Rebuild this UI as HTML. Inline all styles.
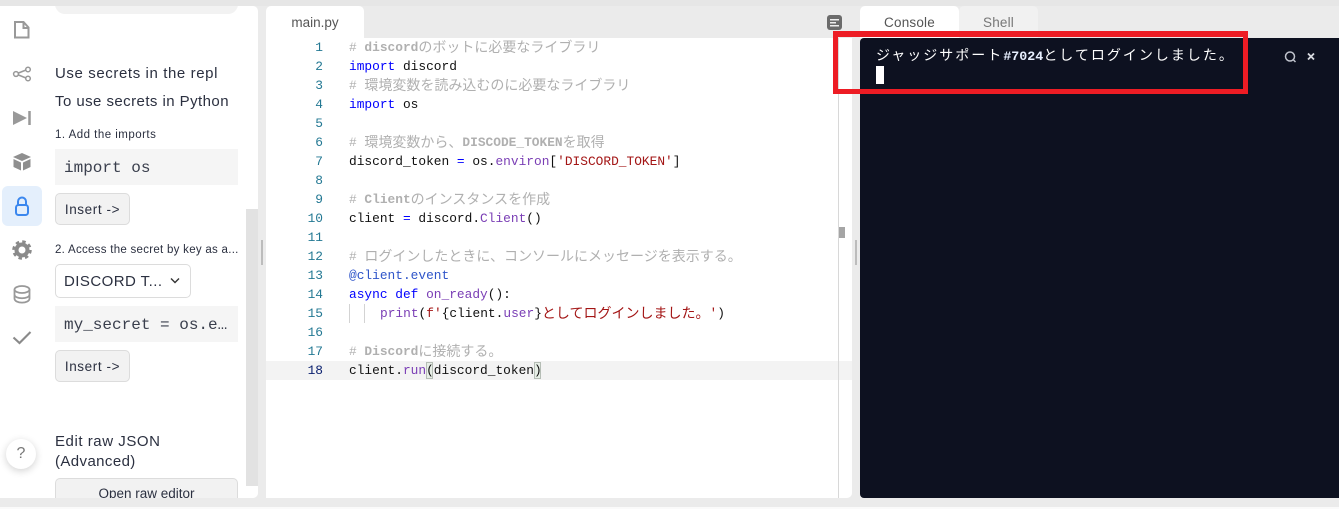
<!DOCTYPE html>
<html><head><meta charset="utf-8">
<style>
html,body{margin:0;padding:0;width:1339px;height:509px;overflow:hidden;background:#ebebeb;}
.a{position:absolute;}
body{font-family:"Liberation Sans","Noto Sans CJK JP",sans-serif;color:#2b3040;position:relative;}
.t{position:absolute;white-space:nowrap;line-height:20px;}
.m{font-family:"Liberation Mono","Noto Sans CJK JP",monospace;}
.btn{position:absolute;background:#f2f2f2;border:1px solid #dcdcdc;border-radius:5px;box-sizing:border-box;font-size:13.5px;letter-spacing:.6px;line-height:31px;text-align:center;color:#2b3040;}
.code{position:absolute;background:#f5f5f5;left:55px;width:183px;height:36px;font-family:"Liberation Mono",monospace;font-size:16px;line-height:39px;padding-left:9px;box-sizing:border-box;color:#3a3f4d;}
.ln{position:absolute;left:286px;width:37px;text-align:right;font-family:"Liberation Mono",monospace;font-size:12.85px;line-height:19px;color:#237893;}
.l{position:absolute;left:349px;white-space:pre;font-family:"Liberation Mono","Noto Sans CJK JP",monospace;font-size:12.85px;line-height:19px;color:#111;}
.l i{font-style:normal;font-size:14px;line-height:1;position:relative;top:1px;}
.c{color:#b0b0b0}.k{color:#0000ff}.f{color:#7a3eb5}.s{color:#a31515}.o{color:#0000ff}
</style></head><body>
<div class="a" style="left:0;top:0;width:1339px;height:6px;background:#e6e6e6"></div>
<div class="a" style="left:0;top:507px;width:1339px;height:2px;background:#fafafa"></div>

<!-- sidebar -->
<div class="a" style="left:0;top:6px;width:258px;height:492px;background:#fff;border-radius:0 5px 5px 0;overflow:hidden">
  <div class="a" style="left:55px;top:-10px;width:183px;height:18px;background:#f2f2f2;border-radius:0 0 10px 10px"></div>
  <div class="a" style="left:246px;top:203px;width:12px;height:277px;background:#e2e2e2"></div>
</div>
<div class="a" style="left:2px;top:186px;width:40px;height:40px;background:#e4effc;border-radius:6px"></div>

<svg class="a" style="left:0;top:0" width="50" height="360" fill="none" stroke="#999" stroke-width="2">
  <path d="M15 22h8.500l5 5.500v10h-13.500z M23.500 22v6h5"/>
  <g stroke-width="1.500"><circle cx="16" cy="74" r="2.400"/><circle cx="28" cy="69.500" r="2.300"/><circle cx="28" cy="78.500" r="2.300"/><path d="M18.500 73l7.500-3M18.500 75l7.500 3"/></g>
  <path d="M13 111l14 7-14 7z" fill="#999" stroke="none"/><path d="M29.500 111v14" stroke-width="2.500"/>
  <path d="M22 153l9 4-9 4-9-4z" fill="#8f8f8f" stroke="none"/><path d="M13.500 159l7.500 3.500v8l-7.500-3.500zM30.500 159l-7.500 3.500v8l7.500-3.500z" fill="#8f8f8f" stroke="none"/>
  <rect x="16" y="205" width="12" height="10" rx="2.500" stroke="#3b87ee" stroke-width="2"/><path d="M18 205v-3.500a4 4 0 0 1 8 0v3.500" stroke="#3b87ee" stroke-width="2"/>
  <circle cx="22" cy="250" r="5.500" stroke="#8a8a8a" stroke-width="4"/><circle cx="22" cy="250" r="8.500" stroke="#8a8a8a" stroke-width="2.500" stroke-dasharray="3.500 3.170"/>
  <ellipse cx="22" cy="289.500" rx="7.500" ry="3.500" stroke-width="1.800"/><path d="M14.500 289.500v9c0 5.500 15 5.500 15 0v-9M14.500 294.500c0 5 15 5 15 0" stroke-width="1.800"/>
  <path d="M13.500 337.500l6 5.500 11-11" stroke-width="2.100" stroke="#8a8a8a"/>
</svg>

<div class="t" style="left:55px;top:64px;font-size:15px;letter-spacing:.6px">Use secrets in the repl</div>
<div class="t" style="left:55px;top:92px;font-size:15px;letter-spacing:.44px">To use secrets in Python</div>
<div class="t" style="left:55px;top:125px;font-size:11.500px;letter-spacing:.48px">1. Add the imports</div>
<div class="code" style="top:149px">import os</div>
<div class="btn" style="left:55px;top:193px;width:75px;height:32px">Insert -&gt;</div>
<div class="t" style="left:55px;top:240px;font-size:11.500px;letter-spacing:.28px">2. Access the secret by key as a...</div>
<div class="a" style="left:55px;top:264px;width:136px;height:34px;border:1px solid #dcdcdc;border-radius:5px;box-sizing:border-box;background:#fff"></div>
<div class="t" style="left:64px;top:272px;font-size:15px;letter-spacing:.45px">DISCORD T...</div>
<svg class="a" style="left:169px;top:276px" width="12" height="9" fill="none" stroke="#333" stroke-width="1.400"><path d="M2 2.500l4 4 4-4"/></svg>
<div class="code" style="top:306px;font-size:16px">my_secret = os.e…</div>
<div class="btn" style="left:55px;top:350px;width:75px;height:32px">Insert -&gt;</div>
<div class="t" style="left:55px;top:432px;font-size:15px;letter-spacing:.55px">Edit raw JSON</div>
<div class="t" style="left:55px;top:452px;font-size:15px;letter-spacing:.4px">(Advanced)</div>
<div class="a" style="left:55px;top:478px;width:183px;height:20px;background:#f2f2f2;border:1px solid #dcdcdc;border-bottom:0;border-radius:5px 5px 0 0;box-sizing:border-box;overflow:hidden;text-align:center;font-size:13.500px;line-height:30px">Open raw editor</div>
<div class="a" style="left:6px;top:439px;width:30px;height:30px;border-radius:50%;background:#fff;box-shadow:0 2px 8px rgba(0,0,0,.18);text-align:center;font-size:16px;line-height:30px;color:#777">?</div>

<div class="a" style="left:261px;top:240px;width:2px;height:25px;background:#bcbcbc"></div>

<!-- editor -->
<div class="a" style="left:266px;top:6px;width:98px;height:32px;background:#fff;border-radius:5px 5px 0 0;text-align:center;font-size:13.500px;line-height:33px;color:#555">main.py</div>
<div class="a" style="left:266px;top:38px;width:586px;height:460px;background:#fff;border-radius:0 0 5px 0"></div>
<div class="a" style="left:266px;top:361px;width:586px;height:19px;background:#f3f3f3"></div>
<div class="a" style="left:838px;top:38px;width:1px;height:460px;background:#d8d8d8"></div>
<div class="a" style="left:839px;top:227px;width:6px;height:11px;background:#a5a5a5"></div>
<div class="a" style="left:855px;top:240px;width:2px;height:25px;background:#bcbcbc"></div>

<div class="ln" style="top:38px">1</div><div class="ln" style="top:57px">2</div><div class="ln" style="top:76px">3</div><div class="ln" style="top:95px">4</div><div class="ln" style="top:114px">5</div><div class="ln" style="top:133px">6</div><div class="ln" style="top:152px">7</div><div class="ln" style="top:171px">8</div><div class="ln" style="top:190px">9</div><div class="ln" style="top:209px">10</div><div class="ln" style="top:228px">11</div><div class="ln" style="top:247px">12</div><div class="ln" style="top:266px">13</div><div class="ln" style="top:285px">14</div><div class="ln" style="top:304px">15</div><div class="ln" style="top:323px">16</div><div class="ln" style="top:342px">17</div><div class="ln" style="top:361px;color:#0b216f">18</div>

<div class="l c" style="top:38px"># <b>discord</b><i>のボットに必要なライブラリ</i></div>
<div class="l" style="top:57px"><span class="k">import</span> discord</div>
<div class="l c" style="top:76px"># <i>環境変数を読み込むのに必要なライブラリ</i></div>
<div class="l" style="top:95px"><span class="k">import</span> os</div>
<div class="l c" style="top:133px"># <i>環境変数から、</i><b>DISCODE_TOKEN</b><i>を取得</i></div>
<div class="l" style="top:152px">discord_token <span class="o">=</span> os.<span class="f">environ</span>[<span class="s">'DISCORD_TOKEN'</span>]</div>
<div class="l c" style="top:190px"># <b>Client</b><i>のインスタンスを作成</i></div>
<div class="l" style="top:209px">client <span class="o">=</span> discord.<span class="f">Client</span>()</div>
<div class="l c" style="top:247px"># <i>ログインしたときに、コンソールにメッセージを表示する。</i></div>
<div class="l" style="top:266px;color:#2f55c9">@client.event</div>
<div class="l" style="top:285px"><span class="k">async def</span> <span class="f">on_ready</span>():</div>
<div class="a" style="left:349px;top:304px;width:1px;height:19px;background:#d3d3d3"></div>
<div class="a" style="left:364px;top:304px;width:1px;height:19px;background:#d3d3d3"></div>
<div class="l" style="top:304px;left:380px"><span class="f">print</span>(<span class="s">f'</span>{client.<span class="f">user</span>}<span class="s"><i>としてログインしました。</i>'</span>)</div>
<div class="l c" style="top:342px"># <b>Discord</b><i>に接続する。</i></div>
<div class="a" style="left:426px;top:362px;width:7px;height:17px;background:#e6eee6;border:1px solid #b5bdb5;box-sizing:border-box"></div>
<div class="a" style="left:534px;top:362px;width:7px;height:17px;background:#e6eee6;border:1px solid #b5bdb5;box-sizing:border-box"></div>
<div class="l" style="top:361px">client.<span class="f">run</span>(discord_token)</div>

<!-- top right -->
<svg class="a" style="left:827px;top:15px" width="15" height="15"><rect width="15" height="15" rx="3" fill="#6b6b6b"/><path d="M3 4h9v1.500H3zM3 7h6v1.500H3zM3 10h9v1.500H3z" fill="#eee"/></svg>
<div class="a" style="left:860px;top:6px;width:99px;height:32px;background:#fff;border-radius:5px 5px 0 0;text-align:center;font-size:13.500px;line-height:33px;color:#555;letter-spacing:.2px">Console</div>
<div class="a" style="left:959px;top:6px;width:79px;height:32px;background:#f1f1f1;border-radius:5px 5px 0 0;text-align:center;font-size:13.500px;line-height:33px;color:#777;letter-spacing:.2px">Shell</div>

<!-- console -->
<div class="a" style="left:860px;top:38px;width:479px;height:460px;background:#0d1120;border-radius:4px 0 0 4px"></div>
<div class="a m" style="left:876px;top:47px;height:20px;white-space:pre;line-height:20px;color:#fff;font-size:14px;letter-spacing:2px">ジャッジサポート<b style="font-size:13.340px;letter-spacing:0;color:#e8f0ff">#7024</b>としてログインしました。</div>
<div class="a" style="left:876px;top:66px;width:8px;height:18px;background:#fff"></div>
<svg class="a" style="left:1283px;top:50px" width="32" height="14" fill="none" stroke="#bfc3cc" stroke-width="1.500"><circle cx="7" cy="6.500" r="4.500"/><path d="M10.500 10l2 2"/><path d="M26 3.500l6 6M32 3.500l-6 6" stroke="#d8dbe0" stroke-width="1.800" transform="translate(-1 0)"/></svg>

<!-- red highlight -->
<div class="a" style="left:833px;top:31px;width:415px;height:63px;border:5px solid #ed1c24;border-top-width:6px;box-sizing:border-box"></div>
</body></html>
